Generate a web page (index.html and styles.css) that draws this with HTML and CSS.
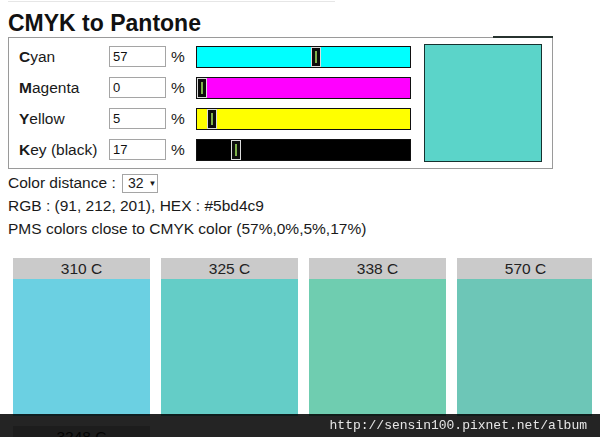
FILE: index.html
```html
<!DOCTYPE html>
<html>
<head>
  <meta charset="utf-8" />
  <title>CMYK to Pantone</title>
  <link rel="stylesheet" href="styles.css">
</head>
<body>
  <div class="topline"></div>
  <h1>CMYK to Pantone</h1>

  <!-- CMYK sliders + preview -->
  <div class="panel">
    <div class="rows">
      <div class="row">
        <label><b>C</b>yan</label>
        <input type="text" value="57" />
        <span class="pct">%</span>
        <div class="bar cyan"><span class="thumb" style="left: 114px;"></span></div>
      </div>
      <div class="row">
        <label><b>M</b>agenta</label>
        <input type="text" value="0" />
        <span class="pct">%</span>
        <div class="bar magenta"><span class="thumb" style="left: 0px;"></span></div>
      </div>
      <div class="row">
        <label><b>Y</b>ellow</label>
        <input type="text" value="5" />
        <span class="pct">%</span>
        <div class="bar yellow"><span class="thumb" style="left: 10px;"></span></div>
      </div>
      <div class="row">
        <label><b>K</b>ey (black)</label>
        <input type="text" value="17" />
        <span class="pct">%</span>
        <div class="bar black"><span class="thumb" style="left: 34px;"></span></div>
      </div>
    </div>
    <div class="swatch" style="background: #5bd4c9;"></div>
  </div>

  <div class="line distance">Color distance : <span class="select">32<span class="caret">&#9660;</span></span></div>
  <div class="line">RGB : (91, 212, 201), HEX : #5bd4c9</div>
  <div class="line">PMS colors close to CMYK color (57%,0%,5%,17%)</div>

  <!-- Matching PMS colours -->
  <div class="cards">
    <div class="card"><div class="name">310 C</div><div class="chip" style="background: #6bd0e2;"></div></div>
    <div class="card"><div class="name">325 C</div><div class="chip" style="background: #64cdc7;"></div></div>
    <div class="card"><div class="name">338 C</div><div class="chip" style="background: #6fcdb0;"></div></div>
    <div class="card"><div class="name">570 C</div><div class="chip" style="background: #6dc6b7;"></div></div>
    <div class="card"><div class="name">3248 C</div><div class="chip" style="background: #70d1bd;"></div></div>
  </div>

  <div class="watermark">http://sensin100.pixnet.net/album</div>
</body>
</html>
```

FILE: styles.css
```css
body {
  font-family: "Liberation Sans", Arial, sans-serif;
  font-size: 15.5px;
  color: #1a1a1a;
  background: #fff;
  margin: 0 8px;
  overflow: hidden;
}

.topline {
  height: 1px;
  width: 335px;
  margin: 1px 0 0 -8px;
  background: #e6e6e6;
}

h1 {
  font-size: 23px;
  line-height: 28px;
  margin: 7px 0 0;
  color: #111;
}

/* Slider panel */
.panel {
  position: relative;
  display: flex;
  align-items: center;
  width: max-content;
  border: 1px solid #9a9a9a;
  padding: 6px 10px;
}
.panel::before {
  content: "";
  position: absolute;
  top: -2px;
  right: -1px;
  width: 60px;
  height: 2px;
  background: #27332f;
}

.rows {
  display: flex;
  flex-direction: column;
  gap: 9px;
}
.row {
  display: grid;
  grid-template-columns: 90px 57px 30px 215px;
  align-items: center;
  height: 22px;
}
.row input {
  box-sizing: border-box;
  width: 57px;
  height: 21px;
  border: 1px solid #a5a5a5;
  font-family: inherit;
  font-size: 13px;
  padding: 0 3px;
  margin: 0;
  color: #111;
}
.pct {
  padding-left: 5px;
}

.bar {
  position: relative;
  box-sizing: border-box;
  height: 22px;
  border: 1px solid #111;
}
.cyan { background: #00ffff; }
.magenta { background: #ff00ff; }
.yellow { background: #ffff00; }
.black { background: #000; }

.thumb {
  position: absolute;
  top: 0;
  box-sizing: border-box;
  width: 10px;
  height: 20px;
  background: #0d0d0d;
  border: 1px solid #dcdcdc;
}
.thumb::after {
  content: "";
  position: absolute;
  left: 3px;
  top: 3px;
  width: 2px;
  height: 12px;
  background: #7fb24a;
}

.swatch {
  box-sizing: border-box;
  width: 118px;
  height: 118px;
  margin-left: 13px;
  border: 1px solid #16322f;
}

/* Text lines */
.line {
  line-height: 23px;
}
.distance {
  margin-top: 2px;
}
.select {
  display: inline-flex;
  align-items: center;
  gap: 5px;
  box-sizing: border-box;
  height: 19px;
  width: 36px;
  margin-left: 2px;
  padding: 0 0 0 5px;
  border: 1px solid #a5a5a5;
  font-size: 14px;
  white-space: nowrap;
  vertical-align: middle;
}
.caret {
  font-size: 8px;
}

/* PMS cards */
.cards {
  display: grid;
  grid-template-columns: repeat(4, 137px);
  column-gap: 11px;
  row-gap: 10px;
  margin: 18px 0 0 5px;
}
.name {
  height: 21px;
  line-height: 21px;
  text-align: center;
  background: #cacaca;
  color: #222;
}
.chip {
  height: 137px;
}

.watermark {
  position: fixed;
  left: 0;
  right: 0;
  bottom: 0;
  height: 23px;
  line-height: 23px;
  padding-right: 13px;
  text-align: right;
  background: rgba(0, 0, 0, 0.86);
  color: #e6e6e6;
  font-family: "Liberation Mono", "Courier New", monospace;
  font-size: 13px;
}
```
